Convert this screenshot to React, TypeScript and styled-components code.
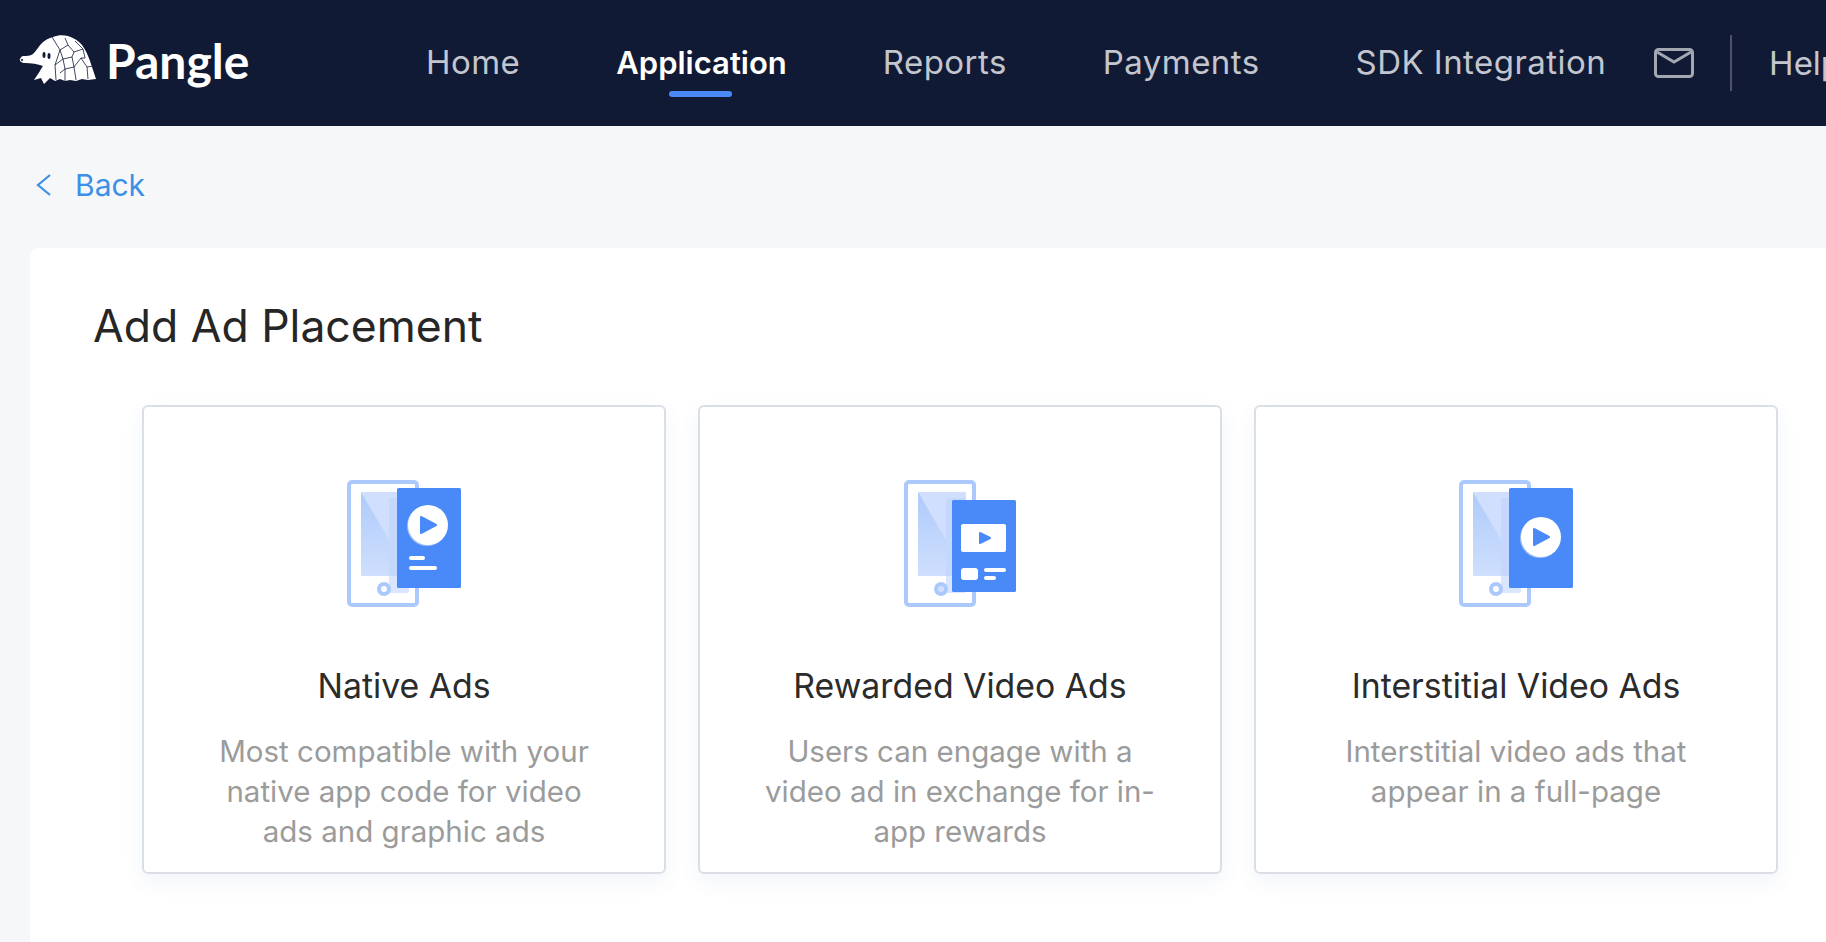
import React from "react";
import styled, { createGlobalStyle } from "styled-components";

const GlobalStyle = createGlobalStyle`
  html, body {
    margin: 0;
    padding: 0;
    height: 942px;
    overflow: hidden;
    background-color: #f6f7f9;
    font-family: Inter, "Liberation Sans", sans-serif;
  }
`;

const Header = styled.header`
  height: 126px;
  background-color: #111a35;
  display: flex;
  align-items: center;
  padding-left: 19px;
  white-space: nowrap;
  overflow: hidden;
`;

const Logo = styled.div`
  width: 407px;
  display: flex;
  align-items: center;
  gap: 9px;
  flex-shrink: 0;
  padding-bottom: 6px;
`;

const LogoText = styled.span`
  color: #ffffff;
  font-family: Lato, sans-serif;
  font-size: 48px;
  font-weight: 700;
`;

const Nav = styled.nav`
  display: flex;
  align-items: center;
  gap: 96px;
  padding-bottom: 2px;
`;

const NavItem = styled.a<{ $active?: boolean }>`
  position: relative;
  color: ${(props) => (props.$active ? "#ffffff" : "#c3c6ce")};
  font-size: ${(props) => (props.$active ? "31px" : "33px")};
  font-weight: ${(props) => (props.$active ? 600 : 400)};
  letter-spacing: ${(props) => (props.$active ? "0" : "0.450px")};

  &::after {
    content: "";
    display: ${(props) => (props.$active ? "block" : "none")};
    position: absolute;
    left: 53px;
    bottom: -16px;
    width: 63px;
    height: 6px;
    border-radius: 3px;
    background-color: #4a8af8;
  }
`;

const Tools = styled.div`
  display: flex;
  align-items: center;
  margin-left: 48px;
`;

const Divider = styled.div`
  width: 2px;
  height: 56px;
  background-color: #4c5368;
  margin: 0 37px 0 36px;
`;

const HelpLink = styled.a`
  color: #c3c6ce;
  font-size: 33px;
`;

const Main = styled.main`
  padding: 0 0 0 30px;
`;

const BackLink = styled.a`
  box-sizing: border-box;
  height: 122px;
  display: flex;
  align-items: center;
  gap: 24px;
  padding: 0 0 5px 6px;
  color: #3d8fe8;
  font-size: 30px;
`;

const Panel = styled.section`
  box-sizing: border-box;
  background-color: #ffffff;
  border-radius: 8px 0 0 0;
  height: 694px;
  padding: 51px 0 0 63px;
`;

const Title = styled.h1`
  margin: 0;
  color: #262626;
  font-size: 44.500px;
  font-weight: 400;
  line-height: 54px;
`;

const CardRow = styled.div`
  display: flex;
  gap: 32px;
  margin: 52px 0 0 49px;
`;

const Card = styled.div`
  box-sizing: border-box;
  width: 524px;
  height: 469px;
  padding-top: 73px;
  border: 2px solid #dadfe7;
  border-radius: 6px;
  background-color: #ffffff;
  box-shadow: 0 8px 20px rgba(70, 100, 170, 0.07);
  display: flex;
  flex-direction: column;
  align-items: center;
  text-align: center;
`;

const CardTitle = styled.h2`
  margin: 57px 0 0;
  color: #2b2b2b;
  font-size: 33.800px;
  font-weight: 400;
  line-height: 44px;
`;

const CardText = styled.p`
  margin: 23px 0 0;
  width: 400px;
  color: #9b9b9b;
  font-size: 29.500px;
  line-height: 40px;
`;

const PangolinLogo = () => (
  <svg width="78" height="50" viewBox="19 37 78 50">
    <path
      fill="#fff"
      d="M20 61C21 59 22 58 23 58C27 58 30 58 33 56C36 53 39 48 42 45C45 42 49 40 53 39C58 37 63 37 68 38C74 40 79 43 82 47C86 52 88 58 90 63C92 69 94 75 96 81L88 82L82 81L76 83L70 82L65 83L60 81L55 83L50 80L44 86L41 80L34 82C36 79 38 76 40 73C41 71 42 69 43 68C38 66 31 65 25 65C22 65 19 63 20 61Z"
    />
    <path
      fill="none"
      stroke="#111a35"
      strokeWidth="0.800"
      d="M52 39L60 52L55 67L56 82M60 52L68 47L74 54L72 59L63 61L60 52M68 47L65 40M74 54L83 51L85 60L81 60M72 59L74 69M63 61L55 67M63 61L65 71L60 75M65 71L74 69L81 60M74 69L76 82M65 71L65 83M81 60L87 69L88 81M87 69L93 68M83 51L75 43"
    />
    <ellipse cx="44" cy="57" rx="1.500" ry="3" fill="#111a35" />
    <ellipse cx="49" cy="58" rx="1.500" ry="3" fill="#111a35" />
    <circle cx="22" cy="62" r="1.100" fill="#111a35" />
  </svg>
);

const MailIcon = () => (
  <svg width="40" height="30" viewBox="0 0 40 30" fill="none" stroke="#a3a7b2" strokeWidth="3">
    <rect x="1.500" y="1.500" width="37" height="27" rx="3" />
    <path d="M3 4L20 14L37 4" />
  </svg>
);

const BackChevron = () => (
  <svg width="15" height="22" viewBox="0 0 15 22" fill="none" stroke="#3d8fe8" strokeWidth="2.200">
    <path d="M14 1L2 11L14 21" />
  </svg>
);

// phone outline shared by the three placement icons
const PhoneBase = ({ homeFill = "#fff" }: { homeFill?: string }) => (
  <>
    <linearGradient id="phoneShade" x1="0" y1="0" x2="0" y2="1">
      <stop offset="0" stopColor="#aecbfb" />
      <stop offset="1" stopColor="#cfdffd" />
    </linearGradient>
    <rect x="2" y="2" width="68" height="123" rx="3" fill="#fff" stroke="#abc9fc" strokeWidth="4" />
    <rect x="14" y="12" width="48" height="84" rx="1" fill="#cfdffd" />
    <path d="M14 12L42 60V96H14Z" fill="url(#phoneShade)" />
    <rect x="42" y="18" width="20" height="95" rx="2" fill="#b9d1fc" opacity="0.55" />
    <circle cx="37" cy="109" r="5" fill={homeFill} stroke="#abc9fc" strokeWidth="4" />
  </>
);

const PlayCircle = ({ cx, cy }: { cx: number; cy: number }) => (
  <>
    <circle cx={cx - 1} cy={cy + 1} r="20" fill="#9fc0fa" />
    <circle cx={cx} cy={cy} r="20" fill="#fff" />
    <path
      d={`M${cx - 7} ${cy - 8}L${cx + 8} ${cy}L${cx - 7} ${cy + 8}Z`}
      fill="#4a8af8"
      stroke="#4a8af8"
      strokeWidth="2"
      strokeLinejoin="round"
    />
  </>
);

const NativeIcon = () => (
  <svg width="114" height="127" viewBox="0 0 114 127">
    <PhoneBase />
    <rect x="50" y="8" width="64" height="100" rx="1.500" fill="#4a8af8" />
    <PlayCircle cx={81} cy={45} />
    <rect x="62" y="76" width="16" height="4" rx="2" fill="#fff" />
    <rect x="62" y="86" width="28" height="4" rx="2" fill="#fff" />
  </svg>
);

const RewardedIcon = () => (
  <svg width="112" height="127" viewBox="0 0 112 127">
    <PhoneBase homeFill="#cfdffd" />
    <rect x="48" y="20" width="64" height="92" rx="1.500" fill="#4a8af8" />
    <rect x="57" y="44" width="45" height="28" rx="2" fill="#fff" />
    <path d="M76 53L86 58L76 63Z" fill="#4a8af8" stroke="#4a8af8" strokeWidth="2" strokeLinejoin="round" />
    <rect x="57" y="88" width="17" height="12" rx="3" fill="#fff" />
    <rect x="80" y="88" width="22" height="4" rx="2" fill="#fff" />
    <rect x="80" y="96" width="12" height="4" rx="2" fill="#fff" />
  </svg>
);

const InterstitialIcon = () => (
  <svg width="114" height="127" viewBox="0 0 114 127">
    <PhoneBase />
    <rect x="50" y="8" width="64" height="100" rx="1.500" fill="#4a8af8" />
    <PlayCircle cx={82} cy={57} />
  </svg>
);

const placements = [
  {
    title: "Native Ads",
    text: "Most compatible with your native app code for video ads and graphic ads",
    Icon: NativeIcon,
  },
  {
    title: "Rewarded Video Ads",
    text: "Users can engage with a video ad in exchange for in-app rewards",
    Icon: RewardedIcon,
  },
  {
    title: "Interstitial Video Ads",
    text: "Interstitial video ads that appear in a full-page",
    Icon: InterstitialIcon,
  },
];

const App = () => {
  return (
    <>
      <GlobalStyle />
      <Header>
        <Logo>
          <PangolinLogo />
          <LogoText>Pangle</LogoText>
        </Logo>
        <Nav>
          <NavItem>Home</NavItem>
          <NavItem $active>Application</NavItem>
          <NavItem>Reports</NavItem>
          <NavItem>Payments</NavItem>
          <NavItem>SDK Integration</NavItem>
        </Nav>
        <Tools>
          <MailIcon />
          <Divider />
          <HelpLink>Help</HelpLink>
        </Tools>
      </Header>
      <Main>
        <BackLink>
          <BackChevron />
          Back
        </BackLink>
        <Panel>
          <Title>Add Ad Placement</Title>
          <CardRow>
            {placements.map(({ title, text, Icon }) => (
              <Card key={title}>
                <Icon />
                <CardTitle>{title}</CardTitle>
                <CardText>{text}</CardText>
              </Card>
            ))}
          </CardRow>
        </Panel>
      </Main>
    </>
  );
};

export default App;
